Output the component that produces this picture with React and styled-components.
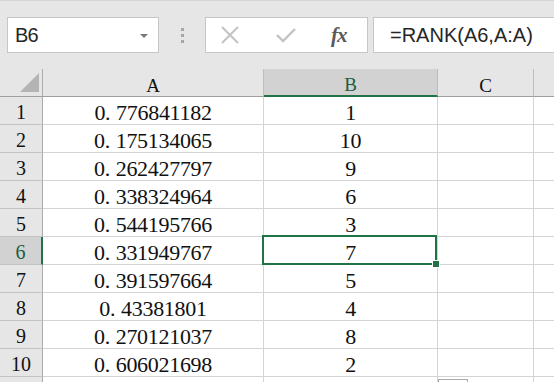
import React from 'react';
import styled, { createGlobalStyle } from 'styled-components';

const GlobalStyle = createGlobalStyle`
  body {
    margin: 0;
    background: #ffffff;
    overflow: hidden;
  }
`;

const data = [
  { a: ['0', '776841182'], b: 1 },
  { a: ['0', '175134065'], b: 10 },
  { a: ['0', '262427797'], b: 9 },
  { a: ['0', '338324964'], b: 6 },
  { a: ['0', '544195766'], b: 3 },
  { a: ['0', '331949767'], b: 7 },
  { a: ['0', '391597664'], b: 5 },
  { a: ['0', '43381801'], b: 4 },
  { a: ['0', '270121037'], b: 8 },
  { a: ['0', '606021698'], b: 2 },
];

const SELECTED_ROW = 6;

function App() {
  return (
    <Page>
      <GlobalStyle />
      <FormulaBar>
        <NameBox>
          <NameText>B6</NameText>
          <Caret />
        </NameBox>
        <Grip>
          <GripDot />
          <GripDot />
          <GripDot />
        </Grip>
        <ButtonBox>
          <IconButton $w={55}>
            <svg width="20" height="20" viewBox="0 0 20 20">
              <path d="M2 2 L18 18 M18 2 L2 18" stroke="#c3c3c3" strokeWidth="2" fill="none" />
            </svg>
          </IconButton>
          <IconButton $w={56}>
            <svg width="22" height="16" viewBox="0 0 22 16">
              <path d="M2 8 L8 14 L20 2" stroke="#c3c3c3" strokeWidth="2.4" fill="none" />
            </svg>
          </IconButton>
          <FxButton>fx</FxButton>
        </ButtonBox>
        <FormulaInput>=RANK(A6,A:A)</FormulaInput>
      </FormulaBar>

      <Sheet>
        <Corner>
          <CornerTriangle />
        </Corner>
        <ColHeader>A</ColHeader>
        <ColHeader $active>B</ColHeader>
        <ColHeader>C</ColHeader>
        <ColHeader $last />

        {data.map((row, i) => {
          const n = i + 1;
          const sel = n === SELECTED_ROW;
          return (
            <React.Fragment key={n}>
              <RowHeader $active={sel}>{n}</RowHeader>
              <Cell>
                {row.a[0]}
                <Dot>.</Dot>
                {row.a[1]}
              </Cell>
              <Cell $selected={sel}>
                {row.b}
                {sel && <FillHandle />}
              </Cell>
              <Cell />
              <Cell $last />
            </React.Fragment>
          );
        })}

        <RowHeader />
        <Cell />
        <Cell />
        <Cell>
          <QuickBox />
        </Cell>
        <Cell $last />
      </Sheet>
    </Page>
  );
}

const Page = styled.div`
  width: 554px;
  height: 382px;
  overflow: hidden;
  background: #ffffff;
`;

const FormulaBar = styled.div`
  display: flex;
  align-items: stretch;
  height: 36px;
  padding: 16px 0 16px 7px;
  background: #e6e6e6;
  border-top: 1px solid #d5d5d5;
`;

const NameBox = styled.div`
  width: 152px;
  display: flex;
  align-items: center;
  justify-content: space-between;
  padding: 0 10px 0 7px;
  box-sizing: border-box;
  background: #ffffff;
  border: 1px solid #c6c6c6;
`;

const NameText = styled.span`
  font-family: "Liberation Sans", Arial, sans-serif;
  font-size: 20px;
  color: #262626;
  letter-spacing: -0.8px;
`;

const Caret = styled.span`
  width: 0;
  height: 0;
  border-left: 4px solid transparent;
  border-right: 4px solid transparent;
  border-top: 4px solid #7a7a7a;
  margin-top: 1px;
`;

const Grip = styled.div`
  width: 46px;
  display: flex;
  flex-direction: column;
  align-items: center;
  justify-content: center;
  gap: 3px;
`;

const GripDot = styled.span`
  width: 3px;
  height: 3px;
  background: #a6a6a6;
`;

const ButtonBox = styled.div`
  width: 163px;
  display: flex;
  align-items: center;
  padding-left: 14px;
  box-sizing: border-box;
  background: #ffffff;
  border: 1px solid #c6c6c6;
  margin-right: 5px;
`;

const IconButton = styled.div`
  width: ${(p) => p.$w}px;
  display: flex;
  align-items: center;
  justify-content: flex-start;
`;

const FxButton = styled.span`
  font-family: "Liberation Serif", "Times New Roman", serif;
  font-style: italic;
  font-weight: bold;
  font-size: 21px;
  color: #5a5a5a;
  letter-spacing: -1px;
`;

const FormulaInput = styled.div`
  flex: 1;
  display: flex;
  align-items: center;
  padding-left: 16px;
  background: #ffffff;
  border: 1px solid #c6c6c6;
  border-right: none;
  font-family: "Liberation Sans", Arial, sans-serif;
  font-size: 20px;
  color: #262626;
`;

const Sheet = styled.div`
  position: relative;
  display: grid;
  grid-template-columns: 43px 221px 174px 96px 1fr;
  grid-auto-rows: 28px;
  font-family: "Liberation Serif", "Times New Roman", serif;
  color: #111111;
`;

const Corner = styled.div`
  position: relative;
  background: #e6e6e6;
  border-right: 1px solid #ababab;
  border-bottom: 1px solid #9f9f9f;
`;

const CornerTriangle = styled.span`
  position: absolute;
  left: 20px;
  top: 4px;
  width: 0;
  height: 0;
  border-left: 19px solid transparent;
  border-bottom: 19px solid #b4b4b4;
`;

const ColHeader = styled.div`
  display: flex;
  align-items: center;
  justify-content: center;
  padding-top: 6px;
  box-sizing: border-box;
  font-size: 19px;
  background: ${(p) => (p.$active ? '#d2d2d2' : '#e6e6e6')};
  color: ${(p) => (p.$active ? '#1d5e3c' : '#111111')};
  border-right: ${(p) => (p.$last ? 'none' : '1px solid #bdbdbd')};
  border-bottom: ${(p) => (p.$active ? '2px solid #217346' : '1px solid #9f9f9f')};
`;

const RowHeader = styled.div`
  display: flex;
  align-items: center;
  justify-content: center;
  padding-top: 4px;
  box-sizing: border-box;
  font-size: 20px;
  background: ${(p) => (p.$active ? '#d2d2d2' : '#e6e6e6')};
  color: ${(p) => (p.$active ? '#1d5e3c' : '#111111')};
  border-right: ${(p) => (p.$active ? '2px solid #217346' : '1px solid #ababab')};
  border-bottom: 1px solid #c3c3c3;
`;

const Cell = styled.div`
  position: relative;
  display: flex;
  align-items: center;
  justify-content: center;
  padding-top: 5px;
  box-sizing: border-box;
  font-size: 22px;
  letter-spacing: -0.3px;
  border-right: ${(p) => (p.$last ? 'none' : '1px solid #d4d4d4')};
  border-bottom: 1px solid #d4d4d4;

  ${(p) =>
    p.$selected &&
    `
    &::after {
      content: '';
      position: absolute;
      left: -2px;
      top: -2px;
      right: 0;
      bottom: -1px;
      border: 2px solid #217346;
      pointer-events: none;
    }
  `}
`;

const Dot = styled.span`
  display: inline-block;
  width: 0.5em;
  text-align: left;
`;

const FillHandle = styled.span`
  position: absolute;
  right: -3px;
  bottom: -4px;
  width: 6px;
  height: 6px;
  background: #217346;
  border: 1px solid #ffffff;
  z-index: 2;
`;

const QuickBox = styled.span`
  position: absolute;
  left: 0;
  top: 2px;
  width: 28px;
  height: 20px;
  border: 1px solid #a9a9a9;
  background: #ffffff;
`;

export default App;
